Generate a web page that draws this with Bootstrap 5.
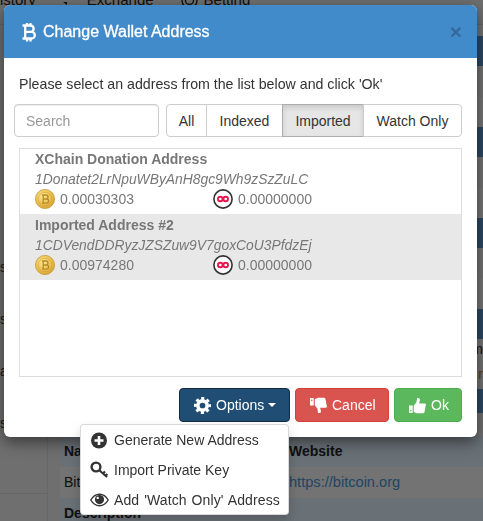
<!DOCTYPE html>
<html lang="en">
<head>
    <meta charset="UTF-8">
    <meta name="viewport" content="width=device-width, initial-scale=1.0">
    <title>Change Wallet Address</title>
    <link href="https://cdn.jsdelivr.net/npm/bootstrap@5.3.0/dist/css/bootstrap.min.css" rel="stylesheet">
    <style>
        html, body { height: 521px; overflow: hidden; }
        body { font-family: "Liberation Sans", Arial, sans-serif; font-size: 14px; color: #333; background: #dedede; }

        /* page behind the modal */
        .page-behind { height: 521px; overflow: hidden; }
        .top-strip { height: 25px; overflow: hidden; border-bottom: 1px solid #cfcfcf; }
        .top-strip-inner { margin-top: -10px; font-size: 15px; line-height: 20px; gap: 27px; color: #222; }
        .strip-item { gap: 6px; }
        .side-col { width: 48px; flex: none; border-right: 1px solid #cfcfcf; padding-top: 232px; color: #333; }
        .side-row { height: 52px; line-height: 20px; }
        .side-end { height: 29px; border-bottom: 1px solid #cfcfcf; }
        .main-col { padding-left: 12px; }
        .band-top { height: 11px; background: #e6e6e6; }
        .band-dark { height: 30px; background: #5a90c6; }
        .band-soft { height: 31px; background: #e6e6e6; }
        .band-cream { height: 30px; background: #ececec; }
        .band-note { height: 20px; background: #ececec; line-height: 20px; color: #222; }
        .band-note.warm { height: 30px; line-height: 30px; color: #c87a20; background: #e6e6e6; }
        .band-short { height: 24px; background: #5a90c6; }
        .band-gap { height: 23px; background: #e0e0e0; }
        .behind-row { height: 31px; background: #d2e0ec; font-weight: 700; line-height: 30px; padding-left: 4px; color: #222; }
        .behind-row.plain { background: #e6e6e6; font-weight: 400; }
        .behind-cell { width: 225px; flex: none; }
        .behind-link { color: #428bca; font-size: 14.6px; }

        /* modal */
        .wallet-modal { position: absolute; left: 4px; top: 5px; width: 473px; height: 432px; z-index: 1060; border: 0; border-radius: 6px; box-shadow: 0 5px 15px rgba(0,0,0,.5); background: #fff; }
        .wallet-head { height: 53px; background: #428bca; color: #fff; border-radius: 6px 6px 0 0; padding: 0 15px 0 18px; }
        .wallet-title { font-size: 16px; line-height: 20px; font-weight: 400; margin: 0 0 0 7px; -webkit-text-stroke: .3px #fff; }
        .wallet-close { font-size: 21px; font-weight: 700; line-height: 1; color: #33699b; }
        .wallet-body { padding: 16px 15px 0 10px; }
        .wallet-intro { margin: 0 0 10px 5px; line-height: 20px; height: 20px; font-size: 14.2px; }
        .search-box { width: 145px; height: 33px; border-radius: 4px; border: 1px solid #ccc; font-size: 14px; padding: 6px 11px; box-shadow: inset 0 1px 1px rgba(0,0,0,.075); }
        .search-box::placeholder { color: #999; }
        .filter-group { margin-left: 7px; }
        .filter-btn { font-size: 14px; line-height: 20px; padding: 6px 0; height: 33px; color: #333; background: #fff; border: 1px solid #ccc; border-radius: 4px; flex: none; }
        .filter-all { width: 41px; }
        .filter-indexed { width: 77px; }
        .filter-imported { width: 82px; }
        .filter-watch { width: 99px; }
        .filter-btn.on { background: #e6e6e6; border-color: #adadad; box-shadow: inset 0 3px 5px rgba(0,0,0,.125); }
        .address-box { margin: 11px 0 0 5px; height: 229px; border: 1px solid #ddd; }
        .address-item { height: 65px; padding: 0 15px; color: #777; line-height: 20px; }
        .address-item.picked { height: 66px; padding-top: 1px; background: #e8e8e8; }
        .address-name { font-weight: 700; }
        .address-hash { font-style: italic; font-size: 13.85px; }
        .amount-cell { width: 178px; gap: 5px; }
        .amount-line { height: 20px; }
        .wallet-foot { gap: 5px; margin-top: 11px; }
        .act-btn { height: 34px; font-size: 14px; line-height: 20px; color: #fff; padding: 0 10px 0 14px; gap: 5px; border-radius: 4px; border: 1px solid transparent; }
        .act-options { background: #204d74; border-color: #122b40; width: 111px; }
        .act-cancel { background: #d9534f; border-color: #d43f3a; width: 94px; }
        .act-ok { background: #5cb85c; border-color: #4cae4c; width: 68px; }
        .caret-down { width: 0; height: 0; border-top: 4px solid #fff; border-left: 4px solid transparent; border-right: 4px solid transparent; margin-left: -1px; }

        /* options menu */
        .options-menu { position: absolute; left: 80px; top: 424px; width: 209px; height: 91px; z-index: 1070; background: #fff; border-radius: 4px; box-shadow: 0 6px 12px rgba(0,0,0,.175); border: 1px solid rgba(0,0,0,.15); }
        .options-row { height: 30px; padding-left: 9px; gap: 5px; color: #333; line-height: 20px; white-space: nowrap; }
        .options-icon { width: 19px; flex: none; }
        .options-wide { word-spacing: 1px; letter-spacing: .1px; }
    </style>
</head>
<body>
    <div class="page-behind">
        <div class="top-strip">
            <div class="top-strip-inner d-flex">
                <span class="strip-item d-flex align-items-center">istory</span>
                <span class="strip-item d-flex align-items-center">
                    <svg width="18" height="14" viewBox="0 0 18 14"><path d="M0 3h14V0l4 4-4 0H0zM18 9H4v3L0 9h18z" fill="#222"/></svg>Exchange
                </span>
                <span class="strip-item d-flex align-items-center">
                    <svg width="17" height="17" viewBox="0 0 17 17"><circle cx="8.5" cy="8.5" r="7.5" fill="none" stroke="#222" stroke-width="1.4"/><circle cx="8.5" cy="8.5" r="4" fill="none" stroke="#222" stroke-width="1.4"/></svg>Betting
                </span>
            </div>
        </div>
        <div class="d-flex">
            <div class="side-col">
                <div class="side-row">s</div>
                <div class="side-row">s</div>
                <div class="side-row">a</div>
                <div class="side-row">s</div>
                <div class="side-end"></div>
            </div>
            <div class="main-col flex-grow-1">
                <div class="band-top"></div>
                <div class="band-dark"></div>
                <div class="band-soft"></div>
                <div class="band-cream"></div>
                <div class="band-dark"></div>
                <div class="band-soft"></div>
                <div class="band-cream"></div>
                <div class="band-dark"></div>
                <div class="band-soft"></div>
                <div class="band-cream"></div>
                <div class="band-dark"></div>
                <div class="band-note text-end">m</div>
                <div class="band-note warm text-end">r</div>
                <div class="band-short"></div>
                <div class="band-gap"></div>
                <div class="behind-row d-flex"><span class="behind-cell">Name</span><span>Website</span></div>
                <div class="behind-row plain d-flex"><span class="behind-cell">Bitcoin</span><span class="behind-link">https://bitcoin.org</span></div>
                <div class="behind-row d-flex"><span>Description</span></div>
            </div>
        </div>
    </div>
    <div class="modal-backdrop fade show"></div>

    <div class="wallet-modal">
        <div class="wallet-head d-flex align-items-center">
            <svg width="14" height="20" viewBox="0 0 14 20"><path d="M0.5 3.5H8.5a3 3 0 0 1 0 6.3H4M4 9.8H9.5a3.3 3.3 0 0 1 0 6.7H0.5M3.2 3.5V16.5M5 1V3.5M8.5 1V3.5M5 16.5V19.5M8.5 16.5V19.5" fill="none" stroke="#fff" stroke-width="2.3"/></svg>
            <h5 class="wallet-title flex-grow-1">Change Wallet Address</h5>
            <span class="wallet-close">×</span>
        </div>
        <div class="wallet-body">
            <p class="wallet-intro">Please select an address from the list below and click 'Ok'</p>
            <div class="d-flex">
                <input type="text" class="form-control search-box" placeholder="Search">
                <div class="btn-group filter-group">
                    <button class="btn filter-btn filter-all">All</button>
                    <button class="btn filter-btn filter-indexed">Indexed</button>
                    <button class="btn filter-btn filter-imported on">Imported</button>
                    <button class="btn filter-btn filter-watch">Watch Only</button>
                </div>
            </div>
            <div class="address-box">
                <div class="address-item">
                    <div class="address-name">XChain Donation Address</div>
                    <div class="address-hash">1Donatet2LrNpuWByAnH8gc9Wh9zSzZuLC</div>
                    <div class="d-flex amount-line">
                        <div class="amount-cell d-flex align-items-center">
                            <svg width="20" height="20" viewBox="0 0 20 20"><defs><radialGradient id="gold1" cx=".4" cy=".35" r=".75"><stop offset="0" stop-color="#fde88f"/><stop offset=".6" stop-color="#e8bd4c"/><stop offset="1" stop-color="#cf9a2e"/></radialGradient></defs><circle cx="10" cy="10" r="9.6" fill="url(#gold1)" stroke="#c4912a" stroke-width=".7"/><circle cx="10" cy="10" r="6.8" fill="none" stroke="#c4912a" stroke-width=".6" opacity=".7"/><path d="M7 6H11a2 2 0 0 1 0 4H8.5M8.5 10H11.5a2.1 2.1 0 0 1 0 4.2H7M8.2 6V14" fill="none" stroke="#b98a2a" stroke-width="1.3"/></svg>
                            <span>0.00030303</span>
                        </div>
                        <div class="amount-cell d-flex align-items-center">
                            <svg width="20" height="20" viewBox="0 0 20 20"><circle cx="10" cy="10" r="9.1" fill="#fff" stroke="#333" stroke-width="1.6"/><circle cx="7.3" cy="10" r="2.3" fill="none" stroke="#e8174f" stroke-width="1.9"/><circle cx="12.7" cy="10" r="2.3" fill="none" stroke="#e8174f" stroke-width="1.9"/></svg>
                            <span>0.00000000</span>
                        </div>
                    </div>
                </div>
                <div class="address-item picked">
                    <div class="address-name">Imported Address #2</div>
                    <div class="address-hash">1CDVendDDRyzJZSZuw9V7goxCoU3PfdzEj</div>
                    <div class="d-flex amount-line">
                        <div class="amount-cell d-flex align-items-center">
                            <svg width="20" height="20" viewBox="0 0 20 20"><circle cx="10" cy="10" r="9.6" fill="url(#gold1)" stroke="#c4912a" stroke-width=".7"/><circle cx="10" cy="10" r="6.8" fill="none" stroke="#c4912a" stroke-width=".6" opacity=".7"/><path d="M7 6H11a2 2 0 0 1 0 4H8.5M8.5 10H11.5a2.1 2.1 0 0 1 0 4.2H7M8.2 6V14" fill="none" stroke="#b98a2a" stroke-width="1.3"/></svg>
                            <span>0.00974280</span>
                        </div>
                        <div class="amount-cell d-flex align-items-center">
                            <svg width="20" height="20" viewBox="0 0 20 20"><circle cx="10" cy="10" r="9.1" fill="#fff" stroke="#333" stroke-width="1.6"/><circle cx="7.3" cy="10" r="2.3" fill="none" stroke="#e8174f" stroke-width="1.9"/><circle cx="12.7" cy="10" r="2.3" fill="none" stroke="#e8174f" stroke-width="1.9"/></svg>
                            <span>0.00000000</span>
                        </div>
                    </div>
                </div>
            </div>
            <div class="wallet-foot d-flex justify-content-end">
                <button class="btn act-btn act-options d-flex align-items-center">
                    <svg width="17" height="17" viewBox="0 0 16 16"><circle cx="8" cy="8" r="4.4" fill="none" stroke="#fff" stroke-width="3.4"/><circle cx="8" cy="8" r="6.8" fill="none" stroke="#fff" stroke-width="2.4" stroke-dasharray="2.9 2.44" stroke-dashoffset="1.45"/></svg>
                    <span>Options</span>
                    <span class="caret-down"></span>
                </button>
                <button class="btn act-btn act-cancel d-flex align-items-center">
                    <svg width="17" height="17" viewBox="0 0 16 16"><g transform="matrix(1 0 0 -1 0 16)"><path d="M0 8h3.5v7H0z" fill="#fff"/><path d="M4.5 8.2 7 5 7.6 1C9.6.4 10.6 1.6 10.2 3.4L9.5 6H14.5C16 6 16.2 7.2 15.7 8L14.6 14C14.3 15 13.8 15.2 13 15.2H7.5L4.5 14Z" fill="#fff"/></g><circle cx="1.7" cy="3" r=".7" fill="#d9534f"/></svg>
                    <span>Cancel</span>
                </button>
                <button class="btn act-btn act-ok d-flex align-items-center">
                    <svg width="17" height="17" viewBox="0 0 16 16"><path d="M0 8h3.5v7H0z" fill="#fff"/><circle cx="1.7" cy="13" r=".7" fill="#5cb85c"/><path d="M4.5 8.2 7 5 7.6 1C9.6.4 10.6 1.6 10.2 3.4L9.5 6H14.5C16 6 16.2 7.2 15.7 8L14.6 14C14.3 15 13.8 15.2 13 15.2H7.5L4.5 14Z" fill="#fff"/></svg>
                    <span>Ok</span>
                </button>
            </div>
        </div>
    </div>

    <div class="options-menu">
        <div class="options-row d-flex align-items-center">
            <svg class="options-icon" width="19" height="17" viewBox="0 0 19 17"><circle cx="9" cy="8.5" r="8" fill="#333"/><path d="M9 4v9M4.5 8.5h9" stroke="#fff" stroke-width="2.6"/></svg>
            <span>Generate New Address</span>
        </div>
        <div class="options-row d-flex align-items-center">
            <svg class="options-icon" width="19" height="18" viewBox="0 0 19 18"><circle cx="6" cy="6" r="4.4" fill="none" stroke="#333" stroke-width="2.4"/><path d="M9 9l8 7M13 12.5l2-2M15.6 14.8l1.8-1.8" fill="none" stroke="#333" stroke-width="2.2"/></svg>
            <span>Import Private Key</span>
        </div>
        <div class="options-row d-flex align-items-center">
            <svg class="options-icon" width="19" height="14" viewBox="0 0 19 14"><path d="M.8 7C3 3.2 6 1.2 9.5 1.2S16 3.2 18.2 7C16 10.8 13 12.8 9.5 12.8S3 10.8.8 7Z" fill="#fff" stroke="#333" stroke-width="1.4"/><circle cx="9.5" cy="6.6" r="4.6" fill="#333"/><circle cx="7.7" cy="4.9" r="1.2" fill="#fff"/></svg>
            <span class="options-wide">Add 'Watch Only' Address</span>
        </div>
    </div>

    <script src="https://cdn.jsdelivr.net/npm/bootstrap@5.3.0/dist/js/bootstrap.bundle.min.js"></script>
</body>
</html>
